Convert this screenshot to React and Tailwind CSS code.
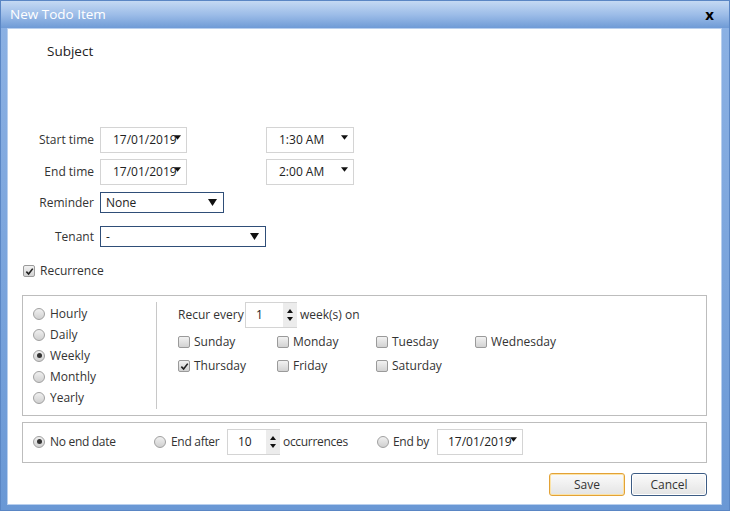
import React from 'react';

const font = { fontFamily: '"Open Sans", "Noto Sans", sans-serif' };

function Caret({ className = '' }) {
  return (
    <svg viewBox="0 0 8 5" className={`w-[7px] h-[5px] ${className}`}>
      <path d="M0 0 L8 0 L4 5 Z" fill="#111" />
    </svg>
  );
}

function DateBox({ value, className = '', pad = 'pl-[12px]' }) {
  return (
    <div className={`relative h-[26px] border border-[#d4d4d4] bg-white flex items-center ${pad} text-[12px] text-[#222] ${className}`}>
      {value}
      <Caret className="absolute right-[5px] top-[7px]" />
    </div>
  );
}

function Select({ value, className = '' }) {
  return (
    <div className={`relative h-[21px] border border-[#2f4e78] bg-white flex items-center pl-[5px] text-[12px] text-[#222] ${className}`}>
      {value}
      <svg viewBox="0 0 9 7" className="absolute right-[6px] top-[6px] w-[9px] h-[7px]">
        <path d="M0 0 L9 0 L4.5 7 Z" fill="#111" />
      </svg>
    </div>
  );
}

function Spin({ value, className = '' }) {
  return (
    <div className={`h-[26px] border border-[#d4d4d4] border-r-0 bg-white flex items-center shrink-0 ${className}`}>
      <span className="flex-1 pl-[10px] text-[12px] text-[#222]">{value}</span>
      <div className="w-[14px] h-full flex flex-col items-center justify-center gap-[4px] bg-[#ececec]">
        <svg viewBox="0 0 6 4" className="w-[6px] h-[4px]"><path d="M0 4 L6 4 L3 0 Z" fill="#111" /></svg>
        <svg viewBox="0 0 6 4" className="w-[6px] h-[4px]"><path d="M0 0 L6 0 L3 4 Z" fill="#111" /></svg>
      </div>
    </div>
  );
}

function Check({ checked }) {
  return (
    <span className="w-[12px] h-[12px] rounded-[2px] border border-[#9a9a9a] bg-gradient-to-b from-[#f2f2f2] to-[#d2d2d2] flex items-center justify-center shrink-0">
      {checked && (
        <svg viewBox="0 0 10 10" className="w-[9px] h-[9px]">
          <path d="M1.5 5.2 L4 7.8 L8.6 1.8" stroke="#222" strokeWidth="1.8" fill="none" />
        </svg>
      )}
    </span>
  );
}

function Radio({ checked }) {
  return (
    <span className="w-[12px] h-[12px] rounded-full border border-[#a0a0a0] bg-gradient-to-b from-[#f0f0f0] to-[#d0d0d0] flex items-center justify-center shrink-0">
      {checked && <span className="w-[5px] h-[5px] rounded-full bg-[#333]" />}
    </span>
  );
}

function Label({ children }) {
  return <span className="w-[86px] text-right text-[12px] text-[#333]">{children}</span>;
}

function Day({ name, checked }) {
  return (
    <div className="w-[99px] flex items-center gap-[4px] text-[12px] text-[#333]">
      <Check checked={checked} />
      {name}
    </div>
  );
}

export default function App() {
  return (
    <div
      style={font}
      className="w-[730px] h-[511px] flex flex-col bg-gradient-to-b from-[#8db2e4] to-[#6a98d5] border border-[#5a86c4] overflow-hidden"
    >
      <div className="h-[27px] shrink-0 flex items-center justify-between pl-[9px] pr-[15px] bg-gradient-to-b from-[#c4d9f3] via-[#9dbde8] to-[#6f9bd6]">
        <span className="text-[13.5px] text-white">New Todo Item</span>
        <span className="text-[15px] font-bold text-black leading-none">x</span>
      </div>

      <div className="flex-1 ml-[6px] mr-[7px] mb-[5px] bg-white border border-[#b8cfee] flex flex-col">
        <div className="pl-[39px] pt-[12px] text-[13.5px] text-[#222] h-[33px]">Subject</div>

        <div className="mt-[65px] flex items-center">
          <Label>Start time</Label>
          <DateBox value="17/01/2019" className="ml-[6px] w-[87px]" />
          <DateBox value="1:30 AM" className="ml-[79px] w-[88px]" />
        </div>
        <div className="mt-[6px] flex items-center">
          <Label>End time</Label>
          <DateBox value="17/01/2019" className="ml-[6px] w-[87px]" />
          <DateBox value="2:00 AM" className="ml-[79px] w-[88px]" />
        </div>
        <div className="mt-[7px] flex items-center">
          <Label>Reminder</Label>
          <Select value="None" className="ml-[6px] w-[124px]" />
        </div>
        <div className="mt-[13px] flex items-center">
          <Label>Tenant</Label>
          <Select value="-" className="ml-[6px] w-[166px]" />
        </div>

        <div className="mt-[17px] ml-[15px] flex items-center gap-[5px] text-[12px] text-[#333] h-[14px]">
          <Check checked />
          Recurrence
        </div>

        <div className="mt-[17px] mx-[14px] h-[121px] border border-[#bdbdbd] flex">
          <div className="w-[133px] pl-[10px] pt-[9px] flex flex-col gap-[4px]">
            {['Hourly', 'Daily', 'Weekly', 'Monthly', 'Yearly'].map((r) => (
              <div key={r} className="h-[17px] flex items-center gap-[5px] text-[12px] text-[#333]">
                <Radio checked={r === 'Weekly'} />
                {r}
              </div>
            ))}
          </div>
          <div className="my-[6px] w-px bg-[#c8c8c8]" />
          <div className="pl-[21px] pt-[6px] flex flex-col">
            <div className="flex items-center text-[12px] text-[#333]">
              <span className="w-[67px]">Recur every</span>
              <Spin value="1" className="w-[52px]" />
              <span className="ml-[3px]">week(s) on</span>
            </div>
            <div className="mt-[7px] flex h-[14px] items-center">
              <Day name="Sunday" />
              <Day name="Monday" />
              <Day name="Tuesday" />
              <Day name="Wednesday" />
            </div>
            <div className="mt-[10px] flex h-[14px] items-center">
              <Day name="Thursday" checked />
              <Day name="Friday" />
              <Day name="Saturday" />
            </div>
          </div>
        </div>

        <div className="mt-[6px] mx-[14px] h-[41px] border border-[#bdbdbd] flex items-center pl-[10px] pb-[2px] text-[12px] text-[#333]">
          <div className="w-[121px] flex items-center gap-[5px] tracking-[-0.3px]">
            <Radio checked />
            No end date
          </div>
          <div className="w-[73px] flex items-center gap-[5px] tracking-[-0.3px]">
            <Radio />
            End after
          </div>
          <Spin value="10" className="w-[53px]" />
          <span className="ml-[3px] w-[94px] tracking-[-0.3px]">occurrences</span>
          <div className="w-[60px] flex items-center gap-[4px] tracking-[-0.3px]">
            <Radio />
            End by
          </div>
          <DateBox value="17/01/2019" className="w-[86px]" pad="pl-[10px]" />
        </div>

        <div className="mt-[10px] mr-[14px] flex justify-end gap-[6px]">
          <button className="w-[76px] h-[23px] rounded-[3px] border border-[#e3a236] shadow-[inset_0_0_0_1px_#fbe3a8] bg-gradient-to-b from-[#fbfbfb] to-[#e4e4e4] text-[12px] text-[#333]">
            Save
          </button>
          <button className="w-[76px] h-[23px] rounded-[3px] border border-[#3d5c84] shadow-[inset_0_0_0_1px_#ffffff] bg-gradient-to-b from-[#fbfbfb] to-[#e4e4e4] text-[12px] text-[#333]">
            Cancel
          </button>
        </div>
      </div>
    </div>
  );
}
